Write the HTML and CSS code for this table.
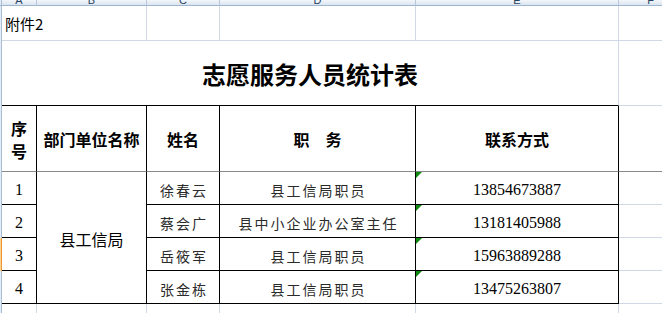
FILE: index.html
```html
<!DOCTYPE html>
<html lang="zh-CN">
<head>
<meta charset="utf-8">
<title>志愿服务人员统计表</title>
<link rel="stylesheet" href="styles.css">
</head>
<body>
<div class="sheet">
  <div class="rh corner"></div>
  <div class="ch"><span>A</span></div>
  <div class="ch"><span>B</span></div>
  <div class="ch"><span>C</span></div>
  <div class="ch"><span>D</span></div>
  <div class="ch"><span>E</span></div>
  <div class="ch"><span>F</span></div>

  <div class="rh"></div>
  <div class="c span2 note">附件2</div>
  <div class="c"></div>
  <div class="c"></div>
  <div class="c"></div>
  <div class="c"></div>

  <div class="rh"></div>
  <div class="c span5 title">志愿服务人员统计表</div>
  <div class="c"></div>

  <div class="rh"></div>
  <div class="c t th seq"><span class="ln">序</span><span class="ln">号</span></div>
  <div class="c t th">部门单位名称</div>
  <div class="c t th">姓名</div>
  <div class="c t th">职　务</div>
  <div class="c t th">联系方式</div>
  <div class="c freeze"></div>

  <div class="rh"></div>
  <div class="c t num">1</div>
  <div class="c t dept">县工信局</div>
  <div class="c t fs">徐春云</div>
  <div class="c t fs">县工信局职员</div>
  <div class="c t num tel">13854673887</div>
  <div class="c"></div>

  <div class="rh"></div>
  <div class="c t num">2</div>
  <div class="c t fs">蔡会广</div>
  <div class="c t fs">县中小企业办公室主任</div>
  <div class="c t num tel">13181405988</div>
  <div class="c"></div>

  <div class="rh sel"></div>
  <div class="c t num">3</div>
  <div class="c t fs">岳筱军</div>
  <div class="c t fs">县工信局职员</div>
  <div class="c t num tel">15963889288</div>
  <div class="c"></div>

  <div class="rh"></div>
  <div class="c t num">4</div>
  <div class="c t fs">张金栋</div>
  <div class="c t fs">县工信局职员</div>
  <div class="c t num tel">13475263807</div>
  <div class="c"></div>

  <div class="rh"></div>
  <div class="c"></div>
  <div class="c"></div>
  <div class="c"></div>
  <div class="c"></div>
  <div class="c"></div>
  <div class="c"></div>
</div>
</body>
</html>
```

FILE: styles.css
```css
html, body {
  margin: 0;
  padding: 0;
  overflow: hidden;
  background: #ffffff;
}

body {
  font-family: "Noto Sans CJK SC", sans-serif;
  color: #000000;
}

.sheet {
  display: grid;
  grid-template-columns: 2px 35px 110px 73px 196px 203px 64px;
  grid-template-rows: 6px 35px 65px 66px 33px 33px 33px 33px 20px;
}

/* row header edge strip */
.rh {
  box-sizing: border-box;
  background: #e4ecf7;
  border-right: 1px solid #a9bdd4;
}

.rh.sel {
  background: #f9d48f;
  border-right-color: #f29536;
}

.rh.corner {
  border-bottom: 1px solid #9eb6ce;
}

/* column header strip */
.ch {
  box-sizing: border-box;
  overflow: hidden;
  display: flex;
  align-items: flex-end;
  justify-content: center;
  background: linear-gradient(#f3f7fc, #dbe4ef);
  border-right: 1px solid #b7c8db;
  border-bottom: 1px solid #9eb6ce;
  font-family: "Liberation Sans", sans-serif;
  font-size: 11px;
  color: #27415f;
}

.ch span {
  line-height: 9px;
}

/* cells */
.c {
  box-sizing: border-box;
  display: flex;
  align-items: center;
  justify-content: center;
  text-align: center;
  border-right: 1px solid #d0d7e5;
  border-bottom: 1px solid #d0d7e5;
}

.c.t {
  border-right-color: #000000;
  border-bottom-color: #000000;
}

.span2 {
  grid-column: span 2;
}

.span5 {
  grid-column: span 5;
  border-bottom-color: #000000;
}

.note {
  justify-content: flex-start;
  padding-left: 3px;
  font-size: 15px;
}

.title {
  font-size: 24px;
  font-weight: 700;
}

.th {
  font-size: 16px;
  font-weight: 700;
  border-bottom-color: #8a8a8a !important;
}

.seq {
  flex-direction: column;
  padding-top: 3px;
}

.seq .ln {
  display: block;
  line-height: 23px;
}

.freeze {
  border-bottom-color: #8a8a8a;
}

.num {
  font-family: "Liberation Serif", serif;
  font-size: 16px;
  padding-top: 3px;
}

.dept {
  grid-row: span 4;
  font-size: 16px;
  padding-top: 3px;
}

.fs {
  font-size: 14px;
  letter-spacing: 2px;
  padding-left: 2px;
  padding-top: 3px;
  color: #2b2b2b;
}

.tel {
  position: relative;
}

.tel::before {
  content: "";
  position: absolute;
  top: 0;
  left: 0;
  width: 0;
  height: 0;
  border-top: 6px solid #108a10;
  border-right: 6px solid transparent;
}
```
